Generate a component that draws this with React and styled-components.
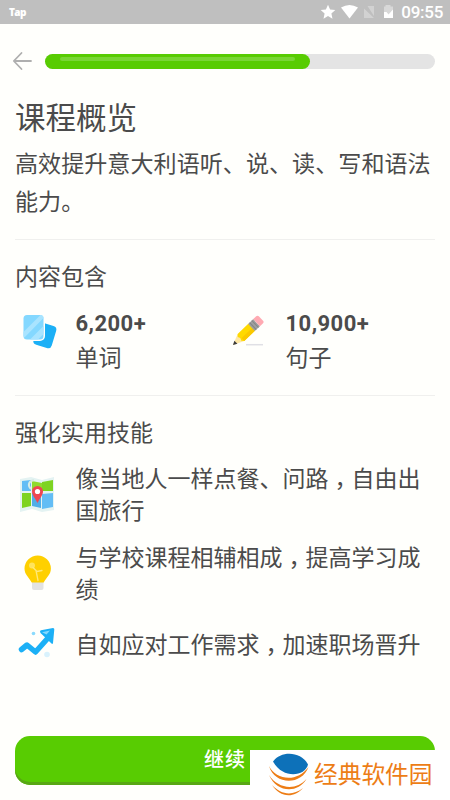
import React from "react";
import styled, { createGlobalStyle } from "styled-components";

const GlobalStyle = createGlobalStyle`
  * {
    box-sizing: border-box;
  }
  body {
    margin: 0;
    background: #fffffc;
  }
  h1, h2, p {
    margin: 0;
    font-weight: 400;
  }
  svg {
    display: block;
  }
`;

const Screen = styled.div`
  position: relative;
  width: 450px;
  height: 800px;
  overflow: hidden;
  display: flex;
  flex-direction: column;
  background: #fffffc;
  color: #4b4b4b;
  font-family: "Noto Sans CJK SC", sans-serif;
`;

const StatusBar = styled.div`
  height: 24px;
  flex-shrink: 0;
  display: flex;
  align-items: center;
  justify-content: space-between;
  padding: 0 7px 0 9px;
  background: #bfbfbf;
  color: #ffffff;
`;

const Carrier = styled.span`
  font: 800 10px/23px "Open Sans", sans-serif;
  letter-spacing: -0.6px;
`;

const StatusIcons = styled.div`
  display: flex;
  align-items: center;
`;

const Clock = styled.span`
  margin-left: 6px;
  font: 500 17px/24px Roboto, sans-serif;
  letter-spacing: -0.3px;
`;

const Header = styled.div`
  height: 74px;
  flex-shrink: 0;
  display: flex;
  align-items: center;
  gap: 13px;
  padding: 0 15px 0 12px;
`;

const Track = styled.div`
  flex: 1;
  height: 15px;
  border-radius: 8px;
  background: #e4e4e4;
`;

const Progress = styled.div`
  height: 15px;
  padding: 3px 15px;
  border-radius: 8px;
  background: #58cc02;
`;

const Shine = styled.div`
  height: 4px;
  border-radius: 2px;
  background: #79d635;
`;

const Content = styled.main`
  padding: 0 15px;
`;

const Title = styled.h1`
  font-size: 30.5px;
  line-height: 36px;
`;

const Description = styled.p`
  height: 105px;
  padding-top: 9px;
  font-size: 23.1px;
  line-height: 38px;
  white-space: nowrap;
`;

const Section = styled.section`
  height: ${(props) => props.$height || "auto"};
  padding-top: 19px;
  border-top: 1px solid #f0f0ee;
`;

const SectionTitle = styled.h2`
  font-size: 23px;
  line-height: 32px;
`;

const Stats = styled.div`
  display: grid;
  grid-template-columns: 210px 210px;
  padding-top: 16px;
`;

const Stat = styled.div`
  display: flex;
  align-items: flex-start;
`;

const IconBox = styled.div`
  width: 60.5px;
  flex-shrink: 0;
`;

const Amount = styled.p`
  font: 700 22px/34px Roboto, sans-serif;
  letter-spacing: 0.45px;
`;

const Unit = styled.p`
  font-size: 23px;
  line-height: 30px;
`;

const Skills = styled.div`
  display: flex;
  flex-direction: column;
  gap: 15px;
  padding-top: 14px;
`;

const Skill = styled.div`
  display: flex;
  align-items: center;
`;

const SkillText = styled.p`
  font-size: 23px;
  line-height: 32px;
  white-space: nowrap;
`;

/* centred full-width comma, dropped to the baseline */
const Comma = styled.span`
  font-family: "Noto Sans CJK TC", sans-serif;
  line-height: 0;
  vertical-align: -7px;
`;

const Continue = styled.button`
  height: 49px;
  margin: auto 15px 15px;
  flex-shrink: 0;
  padding: 0 0 4px;
  border: 0;
  border-radius: 15px;
  background: #58cc02;
  box-shadow: inset 0 -3px 0 #58a714;
  color: #ffffff;
  font: 500 20px/44px "Noto Sans CJK SC", sans-serif;
  letter-spacing: 1px;
`;

/* site mark laid over the button */
const Watermark = styled.div`
  position: absolute;
  right: 0;
  bottom: 0;
  width: 200px;
  height: 50px;
  display: flex;
  align-items: center;
  gap: 4px;
  padding-left: 18px;
  background: #ffffff;
  color: #ed7d16;
  font-size: 23.7px;
  line-height: 46px;
  white-space: nowrap;
`;

const SiteName = styled.span`
  padding-bottom: 4px;
`;

const StatusGlyphs = () => (
  <svg width="76" height="24" viewBox="0 0 76 24" fill="#fff">
    <path d="M9 4.8l2.1 4.8 5.2.5-3.900 3.500 1.100 5.100L9 16l-4.500 2.700 1.100-5.100-3.900-3.500 5.200-.5z" />
    <path d="M22 7.600Q30.500 2.500 39 7.600L30.500 18.500z" />
    <path d="M45 8.500L55 18H45zM48.500 6H55v10z" opacity=".3" />
    <path d="M66.500 5h5v1.500H74V18h-9V6.500h1.500z" opacity=".4" />
    <path d="M65 12h2.500l2 2.500L74 9.500V18h-9z" />
  </svg>
);

const BackArrow = () => (
  <svg width="20" height="20" viewBox="0 0 20 20" fill="none" stroke="#afafaf" strokeWidth="1.800" strokeLinecap="round" strokeLinejoin="round">
    <path d="M19 10H2M9.500 2L1.800 10l7.700 8" />
  </svg>
);

const CardsIcon = () => (
  <svg width="48" height="48" viewBox="0 0 48 48">
    <rect x="20.500" y="17" width="19" height="23" rx="4" fill="#1cb0f6" transform="rotate(17 30 28)" />
    <rect x="6.500" y="6.500" width="23.500" height="27.500" rx="5" fill="#fffffc" />
    <rect x="8.500" y="8" width="20" height="24.500" rx="3.500" fill="#84d8ff" />
    <path d="M8.500 25L25.500 8q3 0 3 3L9.500 30.500l-1-1.500zM15 32.500L28.500 19v8L23 32.500z" fill="#a9e4ff" />
  </svg>
);

const PencilIcon = () => (
  <svg width="48" height="48" viewBox="0 0 48 48">
    <path d="M21 37.700h17" stroke="#e0e0e5" strokeWidth="1.500" />
    <g transform="translate(8 38) rotate(-43.500) scale(1 .88)">
      <path d="M0 0L11-5.500v11z" fill="#ffe8a3" />
      <path d="M0 0l4-2.500v5z" fill="#3c3c3c" />
      <path d="M11-5.500h15v11H11l-2-2.500 1-3-1-3z" fill="#ffd900" />
      <path d="M11 1h15v4.500H11z" fill="#fac800" />
      <path d="M25.500-5.500h7v11h-7z" fill="#a0a0a0" />
      <path d="M27.500-5.500v11M30.500-5.500v11" stroke="#858585" />
      <path d="M32.500-5.500h4q2 0 2 2v7q0 2-2 2h-4z" fill="#ffaab2" />
    </g>
  </svg>
);

const MapIcon = () => (
  <svg width="48" height="48" viewBox="0 -2 48 48">
    <path d="M5 8l11-2 11 3 12-3v33l-12 2-10-3-12 3z" fill="#e4f3f2" />
    <path d="M7 10l9-1v11H7zM27 23l11-1v14l-11 2z" fill="#63bdf5" />
    <path d="M7 22h9v13l-9 2zM27 11l11-2v11H27z" fill="#7ed321" />
    <path d="M17 10l10 2v8H17z" fill="#8edb2d" />
    <path d="M17 22h9v15l-9-2z" fill="#50aee7" />
    <path d="M16 18c-4-4-2-8 3-9" fill="none" stroke="#d7ece5" strokeWidth="2" />
    <path d="M22.500 32C20 27 17 24 17 20.500a5.500 5.500 0 0111 0c0 3.500-3 6.500-5.500 11.500z" fill="#ee4652" />
    <circle cx="22.500" cy="20.500" r="2.600" fill="#fff" />
  </svg>
);

const BulbIcon = () => (
  <svg width="48" height="48" viewBox="0 -1 48 48">
    <path d="M17 32h11.500v7q0 2-2 2H19q-2 0-2-2z" fill="#e3e3e3" />
    <path d="M22.700 6.500a13.200 13.200 0 00-13.200 13c0 6 4 8 7.200 14h12c3.200-6 7.200-8 7.200-14a13.200 13.200 0 00-13.200-13z" fill="#ffd000" />
    <circle cx="17" cy="16.500" r="3" fill="#ffe45c" />
    <path d="M18 18.500l4 4 5-1M21 21.500l2 10" fill="none" stroke="#ffe978" strokeWidth="1.300" strokeLinecap="round" />
  </svg>
);

const TrendIcon = () => (
  <svg width="48" height="48" viewBox="0 0 48 48">
    <path d="M6.500 30.500l5.500-4.500 8.500 7L33 19" fill="none" stroke="#1cb0f6" strokeWidth="5.500" strokeLinecap="round" strokeLinejoin="round" />
    <path d="M25 12.500q0-1 1-1.200L38 9q1.500 0 1.300 1.500L38 24q-.5 1.500-1.500.5L25.500 14z" fill="#1cb0f6" />
    <path d="M27 13.200l8-1.700-3.500 4z" fill="#84d8ff" />
    <circle cx="18.500" cy="14.500" r="1.800" fill="#8bdafd" />
    <circle cx="32" cy="35.500" r="2.800" fill="#d9f2fd" />
  </svg>
);

const GlobeLogo = () => (
  <svg width="42" height="44" viewBox="0 0 42 44">
    <path d="M5 8.500C13-2.500 33-2 40 11.500c-3 12-25 15-35-3z" fill="#0d71b9" />
    <g fill="#ed7d16">
      <path d="M1 13c7 14 28 17 39.500 1-7 19-34 18-39.500-1z" />
      <path d="M1 22c9 14 27 16 37.500 4-9 15-30 13.500-37.500-4z" />
      <path d="M4 32c9 9.500 20 11.500 31 3-10 11.500-24 8.500-31-3z" />
    </g>
  </svg>
);

const stats = [
  { icon: <CardsIcon />, amount: "6,200+", unit: "单词" },
  { icon: <PencilIcon />, amount: "10,900+", unit: "句子" },
];

const skills = [
  {
    icon: <MapIcon />,
    text: <>像当地人一样点餐、问路<Comma>，</Comma>自由出<br />国旅行</>,
  },
  {
    icon: <BulbIcon />,
    text: <>与学校课程相辅相成<Comma>，</Comma>提高学习成<br />绩</>,
  },
  {
    icon: <TrendIcon />,
    text: <>自如应对工作需求<Comma>，</Comma>加速职场晋升</>,
  },
];

const App = () => {
  return (
    <Screen>
      <GlobalStyle />
      <StatusBar>
        <Carrier>Tap</Carrier>
        <StatusIcons>
          <StatusGlyphs />
          <Clock>09:55</Clock>
        </StatusIcons>
      </StatusBar>

      <Header>
        <BackArrow />
        <Track>
          <Progress style={{ width: "68%" }}>
            <Shine />
          </Progress>
        </Track>
      </Header>

      <Content>
        <Title>课程概览</Title>
        <Description>
          高效提升意大利语听、说、读、写和语法
          <br />
          能力。
        </Description>

        <Section $height="156px">
          <SectionTitle>内容包含</SectionTitle>
          <Stats>
            {stats.map((stat) => (
              <Stat key={stat.unit}>
                <IconBox>{stat.icon}</IconBox>
                <div>
                  <Amount>{stat.amount}</Amount>
                  <Unit>{stat.unit}</Unit>
                </div>
              </Stat>
            ))}
          </Stats>
        </Section>

        <Section>
          <SectionTitle>强化实用技能</SectionTitle>
          <Skills>
            {skills.map((skill, i) => (
              <Skill key={i}>
                <IconBox>{skill.icon}</IconBox>
                <SkillText>{skill.text}</SkillText>
              </Skill>
            ))}
          </Skills>
        </Section>
      </Content>

      <Continue>继续</Continue>
      <Watermark>
        <GlobeLogo />
        <SiteName>经典软件园</SiteName>
      </Watermark>
    </Screen>
  );
};

export default App;
